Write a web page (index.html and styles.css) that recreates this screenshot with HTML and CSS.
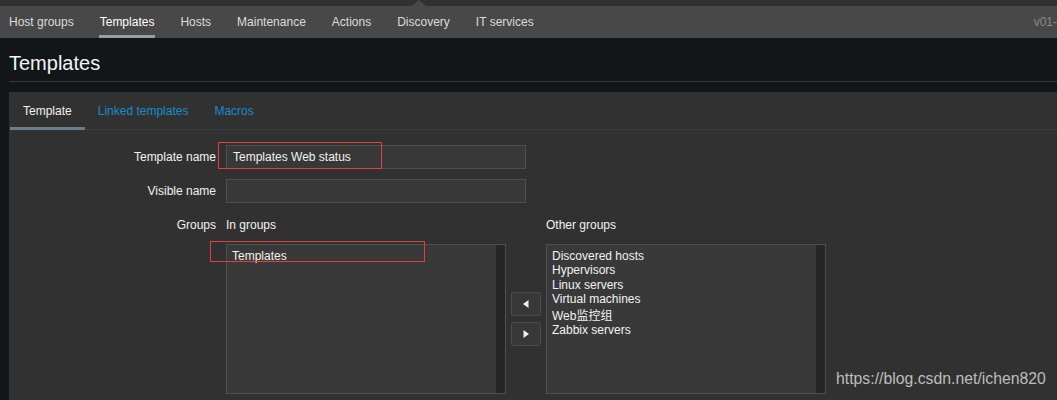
FILE: index.html
```html
<!DOCTYPE html>
<html lang="en">
<head>
<meta charset="utf-8">
<title>Templates</title>
<link rel="stylesheet" href="styles.css">
</head>
<body>
<div class="topbar"><span class="notch"></span></div>
<nav class="nav">
  <a href="#">Host groups</a>
  <a href="#" class="active">Templates</a>
  <a href="#">Hosts</a>
  <a href="#">Maintenance</a>
  <a href="#">Actions</a>
  <a href="#">Discovery</a>
  <a href="#">IT services</a>
  <span class="server">v01-</span>
</nav>
<h1 class="page-title">Templates</h1>
<main class="panel">
  <ul class="tabs">
    <li class="tab active">Template</li>
    <li class="tab">Linked templates</li>
    <li class="tab">Macros</li>
  </ul>
  <div class="form">
    <label class="lbl">Template name</label>
    <div><input class="field" type="text" value="Templates Web status"></div>
    <label class="lbl">Visible name</label>
    <div><input class="field" type="text" value=""></div>
    <label class="lbl lbl-top">Groups</label>
    <div class="groups">
      <div class="ghead">In groups</div>
      <div></div>
      <div class="ghead">Other groups</div>
      <div class="listbox">
        <div class="opts">
          <div class="opt">Templates</div>
        </div>
        <div class="scroll"></div>
      </div>
      <div class="movers">
        <button class="mv" type="button"><svg width="6" height="8" viewBox="0 0 6 8"><polygon points="5.5,0 5.5,8 0,4" fill="#f0f0f0"/></svg></button>
        <button class="mv" type="button"><svg width="6" height="8" viewBox="0 0 6 8"><polygon points="0.5,0 0.5,8 6,4" fill="#f0f0f0"/></svg></button>
      </div>
      <div class="listbox">
        <div class="opts">
          <div class="opt">Discovered hosts</div>
          <div class="opt">Hypervisors</div>
          <div class="opt">Linux servers</div>
          <div class="opt">Virtual machines</div>
          <div class="opt">Web监控组</div>
          <div class="opt">Zabbix servers</div>
        </div>
        <div class="scroll"></div>
      </div>
    </div>
  </div>
</main>
<div class="mark mark-name"></div>
<div class="mark mark-group"></div>
<div class="watermark">https://blog.csdn.net/ichen820</div>
</body>
</html>
```
FILE: styles.css
```css
html, body {
  margin: 0;
  padding: 0;
}
body {
  background: #131619;
  color: #f2f2f2;
  font-family: "Liberation Sans", Arial, "Noto Sans CJK SC", sans-serif;
  font-size: 12px;
  height: 400px;
  overflow: hidden;
  position: relative;
  display: flex;
  flex-direction: column;
}
.topbar {
  height: 6px;
  flex: none;
  background: #313131;
  position: relative;
}
.notch {
  position: absolute;
  left: 412px;
  bottom: 0;
  width: 0;
  height: 0;
  border-left: 7px solid transparent;
  border-right: 7px solid transparent;
  border-bottom: 6px solid #484848;
}
.nav {
  display: flex;
  flex: none;
  align-items: stretch;
  height: 32px;
  background: #484848;
  padding-left: 9px;
  gap: 26px;
  overflow: hidden;
  white-space: nowrap;
}
.nav a {
  color: #dcdcdc;
  text-decoration: none;
  display: flex;
  align-items: center;
  position: relative;
}
.nav a.active {
  color: #ffffff;
}
.nav a.active::after {
  content: "";
  position: absolute;
  left: -1px;
  right: -1px;
  bottom: 0;
  height: 3px;
  background: #9c9c9c;
}
.server {
  margin-left: auto;
  color: #8a8a8a;
  display: flex;
  align-items: center;
}
.page-title {
  flex: none;
  margin: 13px 0 0 9px;
  padding: 0 0 6px 0;
  border-bottom: 1px solid #383838;
  font-size: 20px;
  line-height: 24px;
  font-weight: normal;
  color: #f4f4f4;
}
.panel {
  display: block;
  flex: 1;
  min-height: 0;
  overflow: hidden;
  margin: 10px 0 0 9px;
  background: #313131;
}
.tabs {
  list-style: none;
  margin: 0;
  padding: 0 0 0 1px;
  display: flex;
  height: 37px;
  border-bottom: 1px solid #3b3b3b;
}
.tab {
  padding: 0 13px;
  height: 38px;
  display: flex;
  align-items: center;
  color: #1b8bcc;
  position: relative;
}
.tab.active {
  color: #f2f2f2;
}
.tab.active::after {
  content: "";
  position: absolute;
  left: 0;
  right: 0;
  bottom: 0;
  height: 3px;
  background: #6b7f89;
}
.form {
  display: grid;
  grid-template-columns: 207px 1fr;
  column-gap: 10px;
  row-gap: 10px;
  padding-top: 15px;
}
.lbl {
  text-align: right;
  line-height: 24px;
}
.lbl-top {
  line-height: 14px;
  padding-top: 5px;
}
.field {
  display: block;
  box-sizing: border-box;
  width: 300px;
  height: 24px;
  margin: 0;
  padding: 0 6px;
  background: #383838;
  border: 1px solid #4f4f4f;
  border-radius: 0;
  color: #f2f2f2;
  font-family: inherit;
  font-size: 12px;
  outline: none;
}
.groups {
  display: grid;
  grid-template-columns: 280px 40px 280px;
  row-gap: 12px;
}
.ghead {
  line-height: 14px;
  padding-top: 5px;
}
.listbox {
  box-sizing: border-box;
  height: 150px;
  border: 1px solid #4f4f4f;
  background: #393939;
  display: flex;
}
.opts {
  flex: 1;
  padding: 4px 5px;
}
.opt {
  min-height: 14.3px;
  line-height: normal;
  white-space: nowrap;
}
.scroll {
  width: 9px;
  background: #262626;
}
.movers {
  display: flex;
  flex-direction: column;
  justify-content: center;
  align-items: center;
  gap: 6px;
}
.mv {
  box-sizing: border-box;
  width: 30px;
  height: 24px;
  margin: 0;
  padding: 0;
  background: #383838;
  border: 1px solid #4c4c4c;
  border-radius: 2px;
  display: flex;
  align-items: center;
  justify-content: center;
}
.mv svg {
  display: block;
}
.mark {
  position: absolute;
  box-sizing: border-box;
  border: 1px solid #e53e3e;
}
.mark-name {
  left: 218px;
  top: 142px;
  width: 164px;
  height: 27px;
}
.mark-group {
  left: 210px;
  top: 241px;
  width: 215px;
  height: 21px;
}
.watermark {
  position: absolute;
  left: 836px;
  top: 370px;
  font-size: 15.8px;
  line-height: 18px;
  color: #bdbdbd;
  white-space: nowrap;
}
```
